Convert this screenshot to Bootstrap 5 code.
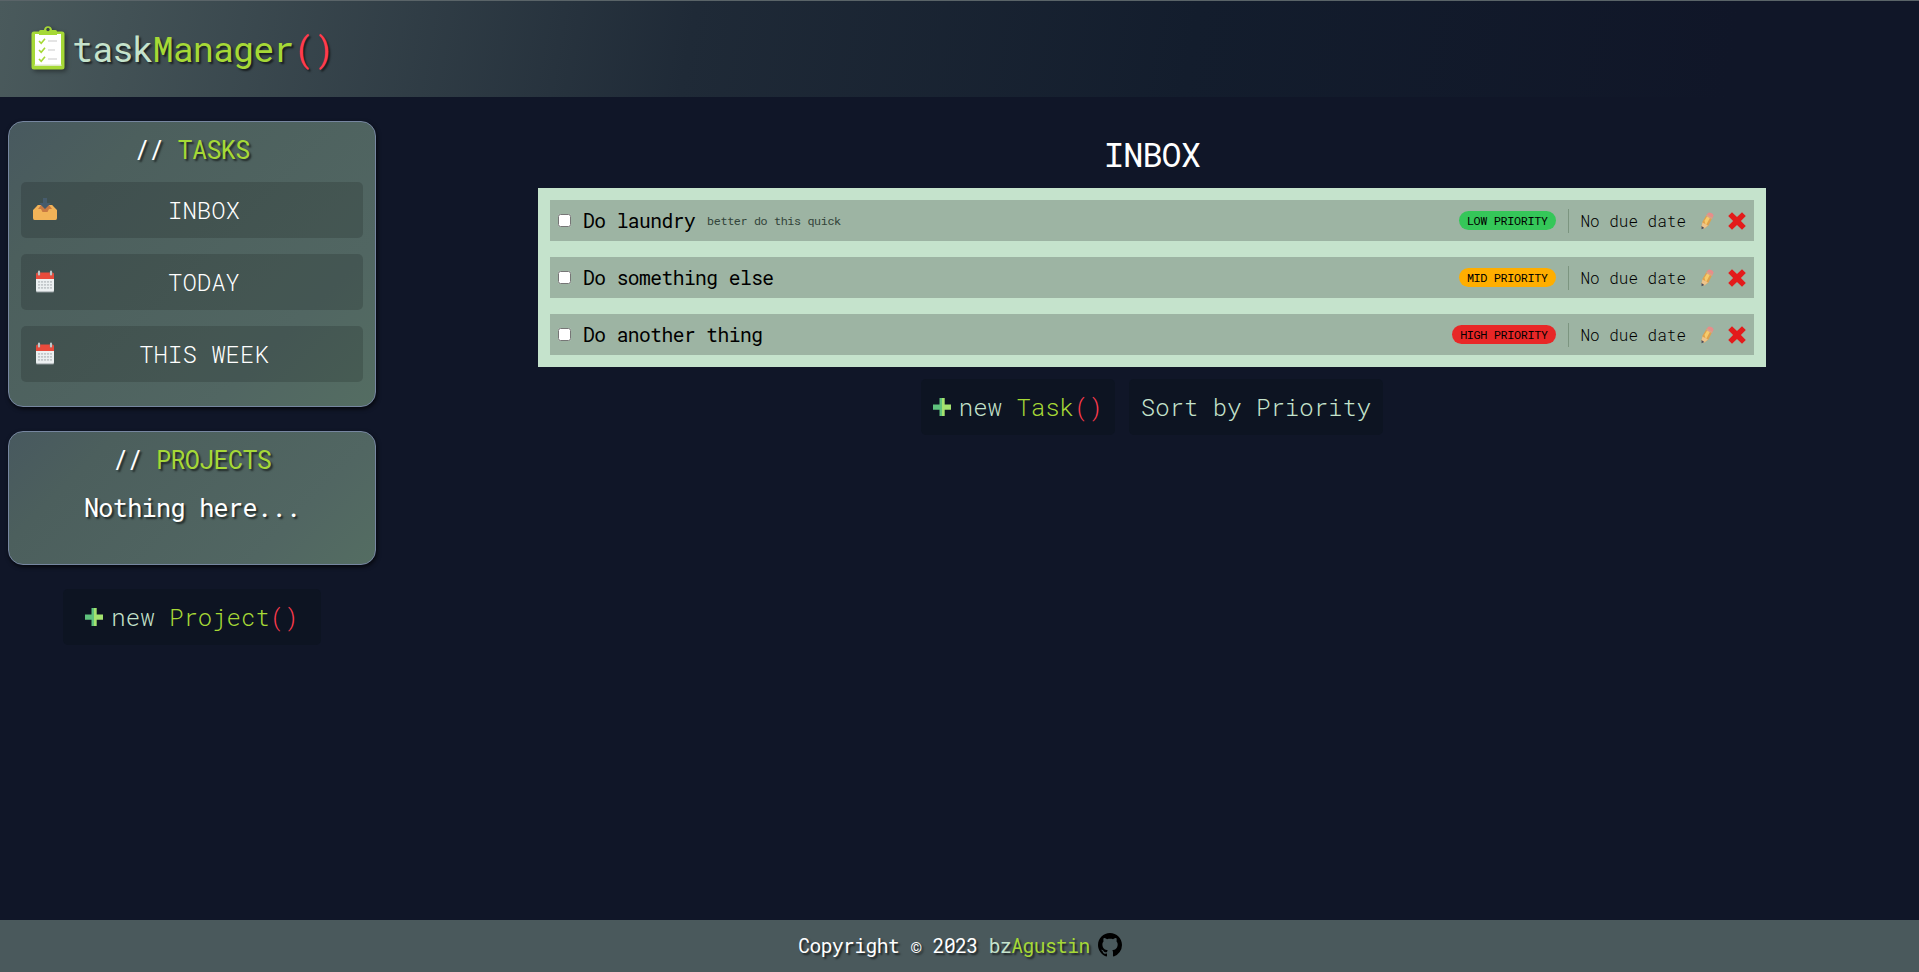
<!DOCTYPE html>
<html lang="en">
<head>
<meta charset="utf-8">
<meta name="viewport" content="width=device-width, initial-scale=1">
<title>taskManager()</title>
<link href="https://cdn.jsdelivr.net/npm/bootstrap@5.3.0/dist/css/bootstrap.min.css" rel="stylesheet">
<style>
  :root { --ink: #101628; --mint: #c5e3cc; --lime: #a6d936; --rose: #ff3b4e; --slate: #4a595c; }
  body { background: var(--ink); color: #fff; font-family: "Roboto Mono", "DejaVu Sans Mono", monospace; font-size: 24px; line-height: 32px; }
  .thin { font-family: "Roboto Mono", "Liberation Mono", monospace; font-weight: 300; }
  .mint { color: var(--mint); }
  .lime { color: var(--lime); }
  .rose { color: var(--rose); }
  .glow { text-shadow: 2px 2px 2px rgba(0,0,0,.6); }
  .logo, .panel h2, .panel p, .board h1, .task-name, .note, .tag, .foot { letter-spacing: -.028em; }
  .top-bar { height: 97px; border-top: 1px solid #5a6468; padding-left: 31px; background: linear-gradient(100deg, #4a5a5c 0%, #1f2a37 36%, #131d2d 62%, #101628 90%); }
  .logo { font-size: 35.2px; line-height: 44px; margin-left: 7px; }
  .clip { margin-bottom: 2px; filter: drop-shadow(2px 2px 2px rgba(0,0,0,.4)); }
  .side { width: 384px; padding: 24px 8px 0; gap: 24px; }
  .panel { border: 1px solid #7686a0; border-radius: 15px; padding: 12px 12px 24px; background: linear-gradient(135deg, #48595f 0%, #4c5f5d 22%, #516662 75%, #546d62 100%); box-shadow: 1px 2px 4px rgba(0,0,0,.7); }
  .panel h2 { font-size: 25.2px; line-height: 32px; font-weight: 400; }
  .panel p { font-size: 25.2px; }
  .side-btn { height: 56px; padding: 0 12px; border: 0; border-radius: 5px; background: rgba(0,0,0,.15); font-size: 24px; line-height: 32px; color: #fff; }
  .side-btn svg { margin-bottom: 2px; }
  .dark-btn { height: 56px; padding: 0 12px; border: 0; border-radius: 5px; background: #0d1422; font-size: 24px; line-height: 32px; }
  .new-project { padding: 0 22px; }
  .actions { gap: 14px; }
  .board { width: 1228px; margin-right: 153px; padding-top: 34px; }
  .board h1 { font-size: 33.5px; line-height: 42px; font-weight: 400; margin: 2px 0 13px; }
  .tasks { background: var(--mint); padding: 12px; gap: 16px; }
  .task { height: 41px; background: #9db4a3; padding: 0 8px; color: #000; line-height: 24px; }
  .task input { width: 13px; height: 13px; margin: 0 12px 1px 0; }
  .task svg { margin-left: 14px; }
  .task-name { font-size: 19.6px; padding-bottom: 2px; }
  .note { font-size: 11.7px; color: #33443a; margin-left: 12px; }
  .tag { font-size: 11.8px; line-height: 19px; height: 19px; border-radius: 10px; padding: 0 8px; margin-bottom: 1px; }
  .low { background: #35c759; } .mid { background: #ffae00; } .high { background: #e82727; }
  .due { font-size: 16px; border-left: 1px solid #7c9580; margin-left: 12px; padding-left: 11.5px; }
  .foot { height: 52px; background: var(--slate); font-size: 19.6px; line-height: 24px; padding: 0 0 3px 1px; }
</style>
</head>
<body class="d-flex flex-column vh-100 overflow-hidden">
<svg class="d-none">
  <symbol id="plus" viewBox="0 0 18 18"><path fill="#5fc27d" d="M6.5 0H9v18H6.500v-6.300H0V6.500h6.500z"/><path fill="#a4e36f" d="M9 0h2.700v6.500H18v5.200h-6.300V18H9z"/></symbol>
  <symbol id="cal" viewBox="0 0 24 24"><path fill="#90999c" d="M3 21h18v1.500q0 1-1 1H4q-1 0-1-1z"/><path fill="#ecf0f1" d="M3 8h18v13q0 1.500-1.200 1.500H4.200Q3 22.500 3 21z"/><path fill="#e94b3c" d="M3 10V5q0-1.500 1.500-1.500h15Q21 3.500 21 5v5z"/><path stroke="#c2c7ca" stroke-width="1.900" stroke-dasharray="2.100 .9" d="M5 12.900h14M5 15.900h14M5 18.900h14"/><path stroke="#7f8c8d" stroke-width="3.400" stroke-linecap="round" opacity=".35" d="M6 4v1M18 4v1"/><path stroke="#bdc8ca" stroke-width="2" stroke-linecap="round" d="M6 2.500v3M18 2.500v3"/></symbol>
  <symbol id="pencil" viewBox="0 0 14 20"><path fill="#e0a24c" d="M2.600 10.500 7 3.200l5.600 3.100-4.300 8.400L4 17.500 1.400 16z"/><path fill="#f6cb6c" d="M4.500 9.800 7.400 4.900l2.700 1.500-4.300 8z"/><path fill="#edc48c" d="M2.400 11.500 8 14.500 4 17.700 1.400 16.600z"/><path fill="#d9a08a" d="m6 4.900 1-1.700 5.900 3.200-1 1.800z"/><path fill="#e98c8a" d="M7 3.300Q8 1.300 9.500 1.500q3.600.7 4 2.900l-.7 2.100z"/><path fill="#4b4c5c" d="M1.500 15 4.400 16.900 1.600 18.300z"/></symbol>
  <symbol id="cross" viewBox="0 0 18 18"><path fill="#e31b1b" d="m4 .2 5 4.900L14 .2 17.800 4l-4.900 5 4.900 5-3.800 3.800-5-4.900-5 4.900L.2 14l4.900-5-4.900-5z"/></symbol>
</svg>

<header class="top-bar d-flex align-items-center flex-shrink-0">
  <svg width="34" height="44" viewBox="0 0 34 44" class="clip flex-shrink-0"><rect x=".5" y="5.500" width="33" height="38" rx="2.500" fill="#a6d936"/><path fill="#fff" d="M4 8h26v32H4z"/><path fill="#dce8c3" d="M3.500 38.500h27V40h-27z"/><path fill="#a6d936" d="M8 5.500Q8 4 9.500 4H13q.3-3.500 4-3.800Q20.700.5 21 4h3.500Q26 4 26 5.500V9H8z"/><circle cx="17" cy="3.500" r="1.700" fill="#394547"/><path fill="none" stroke="#a6d936" stroke-width="1.600" d="m8 15 2.200 2.300L14 12.700M8 24l2.200 2.300L14 21.700M8 33l2.200 2.300L14 30.700"/><path stroke="#dcdcdc" stroke-width="1.500" d="M17 15h9M17 24h7M17 33h9"/></svg>
  <div class="logo glow"><span class="mint">task</span><span class="lime">Manager</span><span class="rose">()</span></div>
</header>

<main class="d-flex flex-grow-1">
  <aside class="side d-flex flex-column">
    <section class="panel text-center d-flex flex-column">
      <h2 class="glow mb-3">// <span class="lime">TASKS</span></h2>
      <div class="d-flex flex-column gap-3">
        <button class="side-btn thin d-flex align-items-center w-100"><svg width="24" height="24" viewBox="0 0 24 24"><path fill="#c97a43" d="M5 8h14l4 5v4H1v-4z"/><path fill="#f2b358" d="M0 13 5 8h3l-3 4h3l1.500 3h5L16 12h3l-3-4h3l5 5v8q0 2-1.500 2h-21Q0 23 0 21z"/><path fill="#465b6c" d="M10 1h4v5h4l-6 6-6-6h4z"/></svg><span class="flex-grow-1">INBOX</span></button>
        <button class="side-btn thin d-flex align-items-center w-100"><svg width="24" height="24"><use href="#cal"/></svg><span class="flex-grow-1">TODAY</span></button>
        <button class="side-btn thin d-flex align-items-center w-100"><svg width="24" height="24"><use href="#cal"/></svg><span class="flex-grow-1">THIS WEEK</span></button>
      </div>
    </section>
    <section class="panel text-center">
      <h2 class="glow mb-3">// <span class="lime">PROJECTS</span></h2>
      <p class="glow mb-3">Nothing here...</p>
    </section>
    <button class="dark-btn new-project thin d-flex align-items-center align-self-center"><svg width="18" height="18" class="me-2"><use href="#plus"/></svg><span><span class="mint">new</span> <span class="lime">Project</span><span class="rose">()</span></span></button>
  </aside>

  <section class="board ms-auto">
    <h1 class="text-center">INBOX</h1>
    <div class="tasks d-flex flex-column">
      <div class="task d-flex align-items-center"><input type="checkbox"><span class="task-name">Do laundry</span><span class="note">better do this quick</span><span class="tag low ms-auto">LOW PRIORITY</span><span class="due thin">No due date</span><svg width="14" height="20"><use href="#pencil"/></svg><svg width="18" height="18"><use href="#cross"/></svg></div>
      <div class="task d-flex align-items-center"><input type="checkbox"><span class="task-name">Do something else</span><span class="tag mid ms-auto">MID PRIORITY</span><span class="due thin">No due date</span><svg width="14" height="20"><use href="#pencil"/></svg><svg width="18" height="18"><use href="#cross"/></svg></div>
      <div class="task d-flex align-items-center"><input type="checkbox"><span class="task-name">Do another thing</span><span class="tag high ms-auto">HIGH PRIORITY</span><span class="due thin">No due date</span><svg width="14" height="20"><use href="#pencil"/></svg><svg width="18" height="18"><use href="#cross"/></svg></div>
    </div>
    <div class="actions d-flex justify-content-center mt-2 pt-1">
      <button class="dark-btn thin d-flex align-items-center"><svg width="18" height="18" class="me-2"><use href="#plus"/></svg><span><span class="mint">new</span> <span class="lime">Task</span><span class="rose">()</span></span></button>
      <button class="dark-btn thin mint">Sort by Priority</button>
    </div>
  </section>
</main>

<footer class="foot d-flex align-items-center justify-content-center flex-shrink-0">
  <span class="glow">Copyright © 2023 <span class="mint">bz</span><span class="lime">Agustin</span></span>
  <svg width="24" height="24" viewBox="0 0 16 16" class="ms-2"><path d="M8 0C3.580 0 0 3.580 0 8c0 3.540 2.290 6.530 5.470 7.590.4.070.55-.17.55-.38 0-.19-.01-.82-.01-1.490-2.010.37-2.530-.49-2.690-.94-.09-.23-.48-.94-.82-1.130-.28-.15-.68-.52-.01-.53.63-.01 1.080.58 1.230.82.72 1.210 1.870.87 2.330.66.07-.52.28-.87.51-1.070-1.780-.2-3.640-.89-3.640-3.950 0-.87.31-1.590.82-2.150-.08-.2-.36-1.020.08-2.120 0 0 .67-.21 2.200.82.64-.18 1.320-.27 2-.27s1.360.09 2 .27c1.530-1.040 2.200-.82 2.200-.82.44 1.100.16 1.920.08 2.120.51.56.82 1.270.82 2.150 0 3.070-1.870 3.750-3.650 3.950.29.25.54.73.54 1.480 0 1.070-.01 1.930-.01 2.200 0 .21.15.46.55.38A8.010 8.010 0 0 0 16 8c0-4.420-3.580-8-8-8"/></svg>
</footer>
<script src="https://cdn.jsdelivr.net/npm/bootstrap@5.3.0/dist/js/bootstrap.bundle.min.js"></script>
</body>
</html>
